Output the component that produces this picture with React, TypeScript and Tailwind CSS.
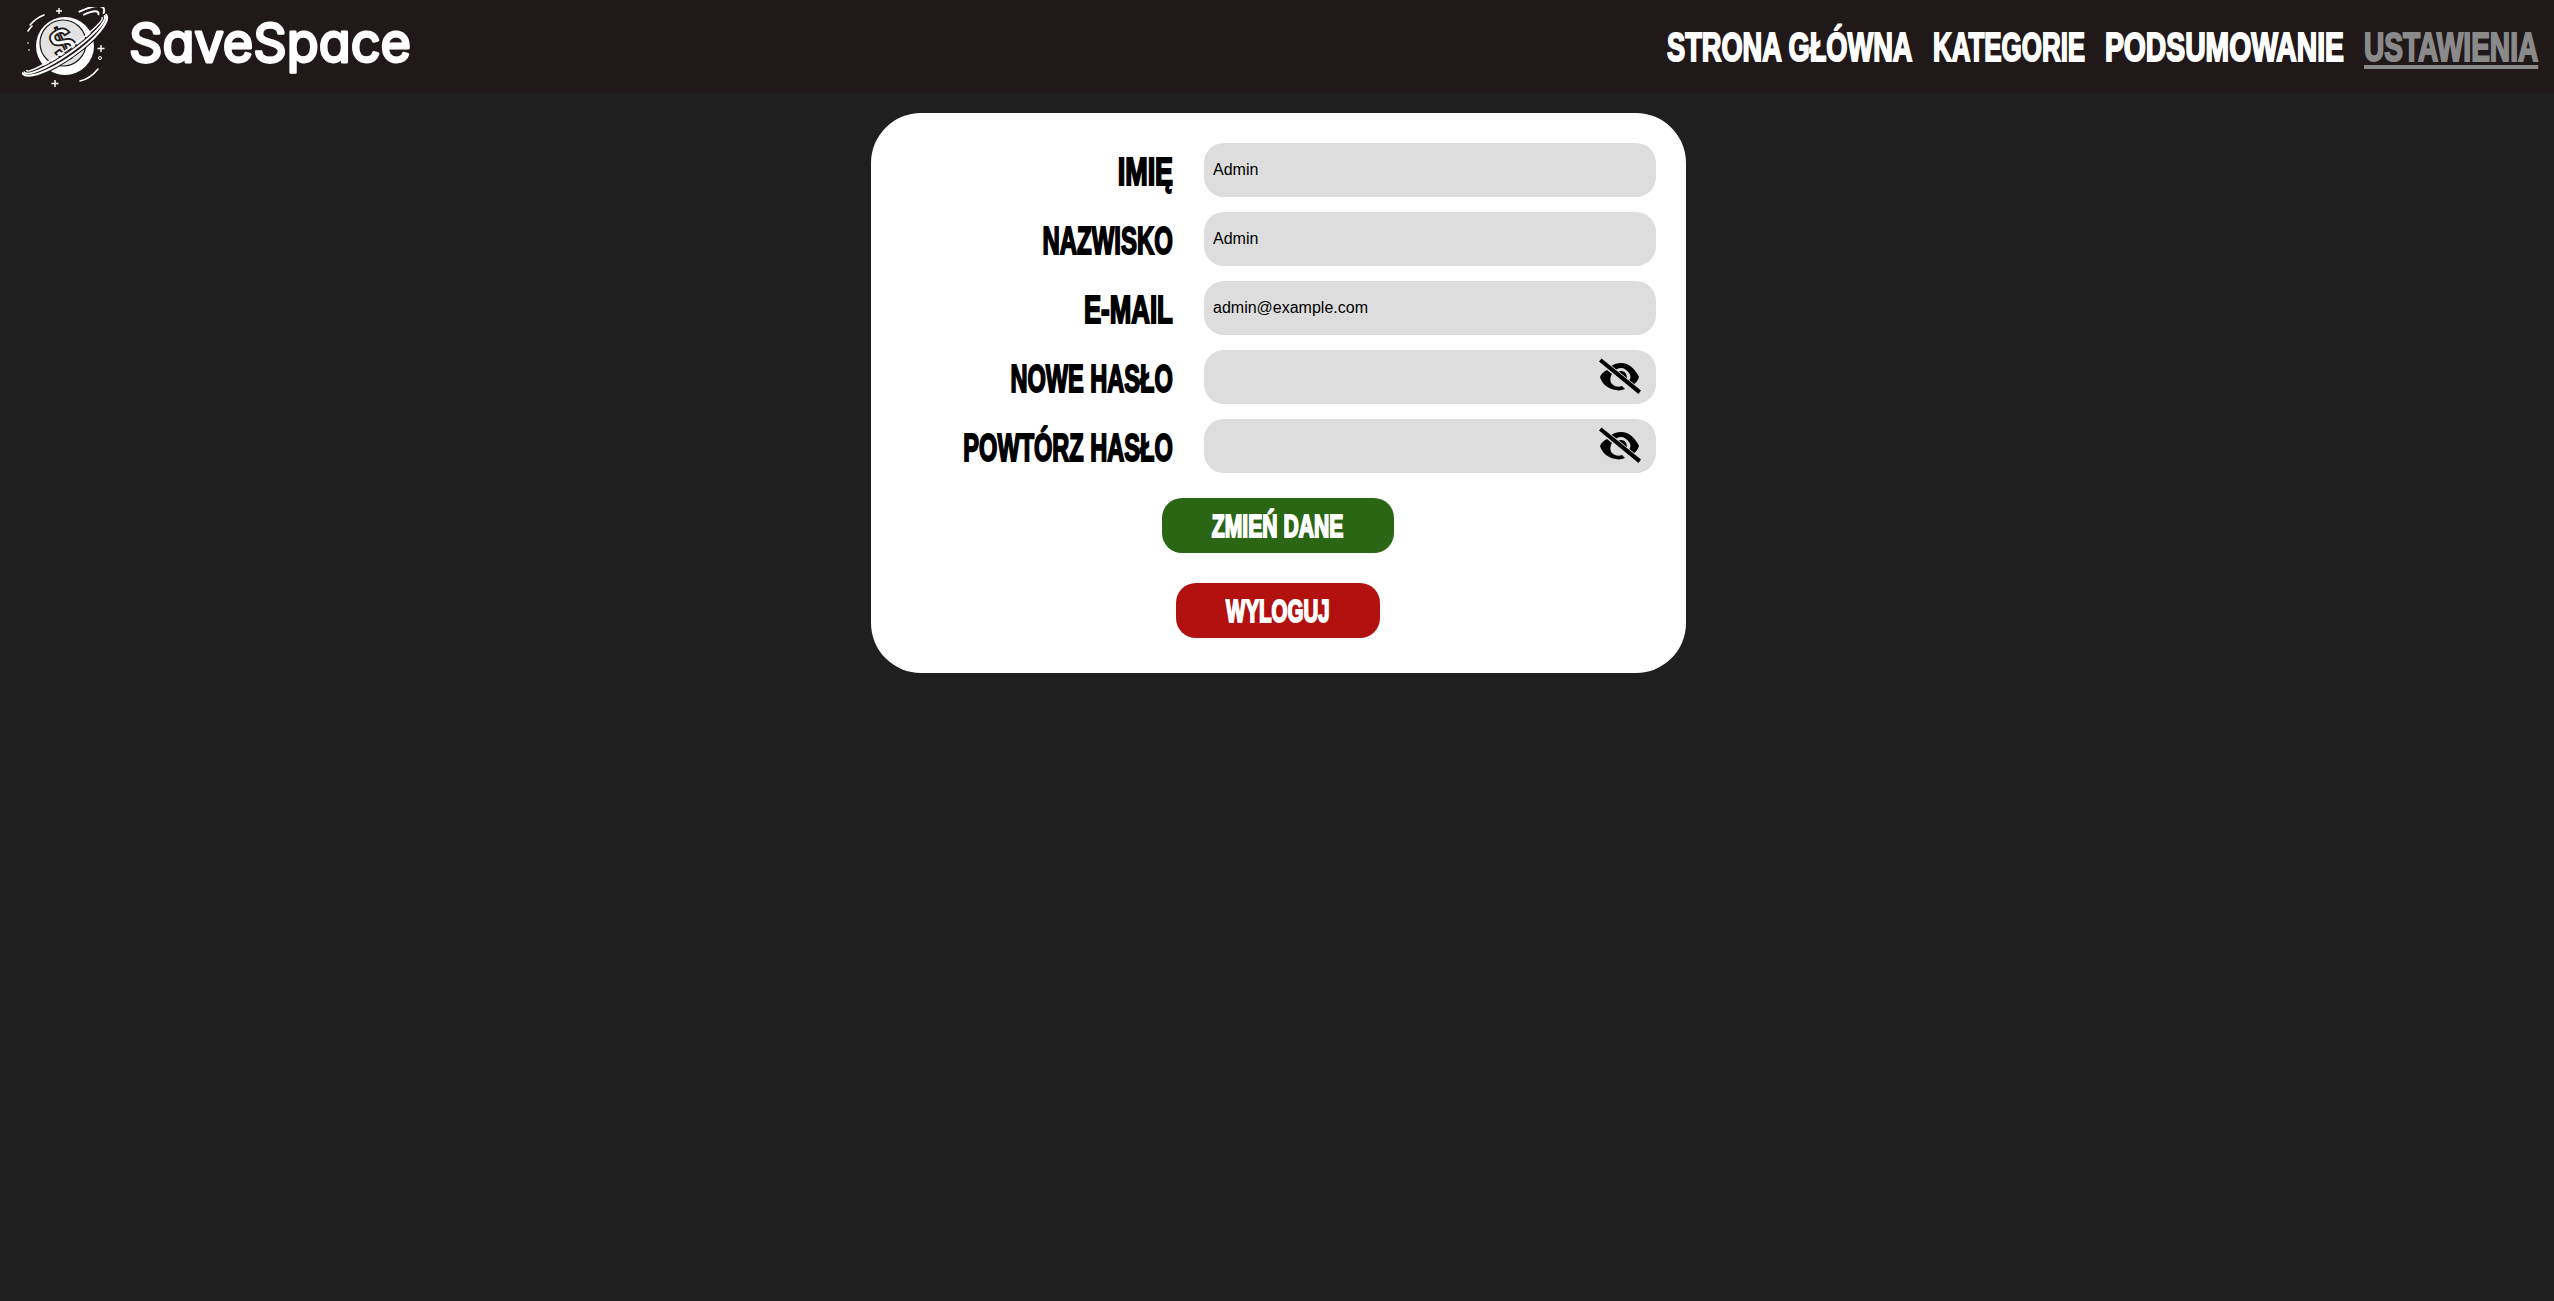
import React from 'react';

const heavy = "font-['Liberation_Sans',sans-serif] font-bold uppercase whitespace-nowrap [-webkit-text-stroke:2px_currentColor]";

const Logo = () => (
  <svg viewBox="0 0 88 80" className="w-[88px] h-[80px] shrink-0" fill="none" stroke="white">
    <circle cx="43" cy="39" r="29" fill="white" stroke="none" />
    <circle cx="41" cy="36" r="23" fill="#e2e2e2" stroke="#201819" strokeWidth="1.2" />
    <text x="41" y="50" fontSize="42" fontWeight="700" textAnchor="middle" fill="white" stroke="#201819" strokeWidth="1.8" fontFamily="'Liberation Sans', sans-serif" transform="rotate(-25 41 36)">$</text>
    <g transform="rotate(-35 43 38)" strokeLinecap="round">
      <path d="M-7 38 A50 11 0 0 0 93 38" strokeWidth="8" stroke="#201819" />
      <path d="M-8 37 A51 14 0 0 0 94 37" strokeWidth="2.2" />
      <path d="M-6 37 A49 10 0 0 0 92 37" strokeWidth="2" />
      <path d="M-3 37 A46 6 0 0 0 89 37" strokeWidth="1.6" />
      <path d="M88 32 A45 9 0 0 0 76 24" strokeWidth="2" />
      <path d="M93 34 A50 13 0 0 0 74 19" strokeWidth="2" />
    </g>
    <path d="M8 18 Q14 11 22 8M6 24 Q8 21 10 19M58 74 Q68 72 76 62" strokeWidth="1.6" strokeLinecap="round" />
    <path d="M37 1v6M34 4h6M79 38v7M75.500 41.500h7M33 73v7M29.500 76.500h7" strokeWidth="1.4" />
    <circle cx="78" cy="51" r="1.500" strokeWidth="1" />
    <circle cx="6" cy="36" r="0.800" fill="white" stroke="none" />
    <circle cx="7" cy="43" r="0.800" fill="white" stroke="none" />
  </svg>
);

// hand drawn, the icon packages have no eye this heavy
const HiddenEye = () => (
  <svg viewBox="0 0 44 37" className="absolute right-[14px] top-[8px] w-[44px] h-[37px]" fill="black">
    <path d="M11 10 C15 6 19 5 23 5 C31 5 37 11 41 19 C40 22 38 25 35 27 L31 23 C33 20 33 17 31 15 C29 12 26 10 23 10 C20 10 18 11 16 14 Z" />
    <path d="M18 17 C19 14 21 13 23 13 C27 13 29 16 29 21 Z" />
    <path d="M9 12 C5 14 3 16 2 19 C4 26 10 31 18 32 C21 33 24 32 27 31 L24 28 C22 29 19 29 17 28 C12 26 11 21 14 16 Z" />
    <path d="M1 3.500 L3.500 0.500 L43 32.500 L40.500 36 Z" stroke="#dddddd" strokeWidth="1.500" paintOrder="stroke" />
  </svg>
);

const links = [
  { label: 'Strona główna', box: 'w-[245px]', squeeze: 'scale-x-[0.664]' },
  { label: 'Kategorie', box: 'w-[151px]', squeeze: 'scale-x-[0.632]' },
  { label: 'Podsumowanie', box: 'w-[238px]', squeeze: 'scale-x-[0.69]' },
  { label: 'Ustawienia', box: 'w-[174px]', squeeze: 'scale-x-[0.685]' },
];

const NavLink = ({ label, box, squeeze, active }: { label: string; box: string; squeeze: string; active?: boolean }) => (
  <a className={`${box} block`}>
    <span className={`${heavy} ${squeeze} inline-block origin-left text-[41px] leading-none ${active ? 'text-[#8a8a8a] underline decoration-4 underline-offset-4' : 'text-white'}`}>{label}</span>
  </a>
);

const Row = ({ label, squeeze, value, secret }: { label: string; squeeze: string; value?: string; secret?: boolean }) => (
  <div className="flex items-center gap-[31px] h-[54px]">
    <label className="w-[302px] flex justify-end leading-none translate-y-[2px]">
      <span className={`${heavy} ${squeeze} inline-block shrink-0 origin-right text-[38px] leading-none text-black`}>{label}</span>
    </label>
    <div className="relative w-[452px] h-[54px]">
      <input readOnly value={value ?? ''} type={secret ? 'password' : 'text'} className="w-full h-full rounded-[20px] bg-[#dddddd] pl-[9px] text-[16px] text-black font-['Liberation_Sans',sans-serif] outline-none" />
      {secret && <HiddenEye />}
    </div>
  </div>
);

export default function App() {
  return (
    <div className="min-h-[1301px] bg-[#1f1f1f]">
      <header className="h-[93px] bg-[#201819] flex items-center justify-between pl-[22px] pr-[16px]">
        <div className="flex items-center gap-[18px]">
          <Logo />
          <svg viewBox="0 0 300 80" className="w-[300px] h-[80px]">
            <text x="1" y="55" fontFamily="Inter, sans-serif" fontSize="54" fontWeight="400" textLength="282" lengthAdjust="spacingAndGlyphs" className="[font-feature-settings:'cv11']" fill="white" stroke="white" strokeWidth="2.800" strokeLinejoin="round">SaveSpace</text>
          </svg>
        </div>
        <nav className="flex items-center gap-[21px] translate-y-[1px]">
          {links.map((l, i) => <NavLink key={l.label} {...l} active={i === 3} />)}
        </nav>
      </header>
      <main className="flex justify-center pl-[3px] pt-[20px]">
        <form className="w-[815px] bg-white rounded-[50px] pt-[30px] pr-[30px] pb-[35px] flex flex-col gap-[15px]">
          <Row label="Imię" squeeze="scale-x-[0.71]" value="Admin" />
          <Row label="Nazwisko" squeeze="scale-x-[0.63]" value="Admin" />
          <Row label="E-mail" squeeze="scale-x-[0.68]" value="admin@example.com" />
          <Row label="Nowe hasło" squeeze="scale-x-[0.62]" secret />
          <Row label="Powtórz hasło" squeeze="scale-x-[0.62]" secret />
          <div className="flex flex-col items-center pl-[29px] mt-[10px] gap-[30px]">
            <button type="button" className="h-[55px] w-[232px] rounded-[20px] bg-[#2b6614] text-white">
              <span className={`${heavy} inline-block scale-x-[0.66] text-[32px] leading-none translate-y-[1px]`}>Zmień dane</span>
            </button>
            <button type="button" className="h-[55px] w-[204px] rounded-[20px] bg-[#b31010] text-white">
              <span className={`${heavy} inline-block scale-x-[0.64] text-[32px] leading-none translate-y-[1px]`}>Wyloguj</span>
            </button>
          </div>
        </form>
      </main>
    </div>
  );
}
